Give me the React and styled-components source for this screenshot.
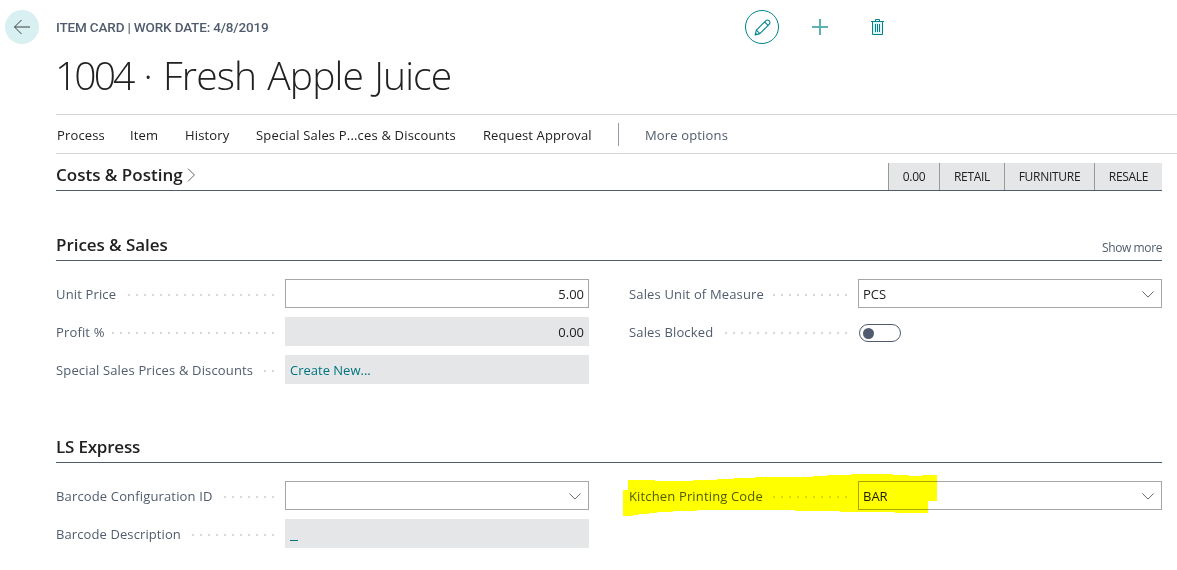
import React from "react";
import styled, { createGlobalStyle } from "styled-components";

const Global = createGlobalStyle`
  * { box-sizing: border-box; }
  body { margin: 0; background: #fff; overflow: hidden; }
`;

const ink = "#212121";
const slate = "#505c6d";
const teal = "#00757d";

const Page = styled.main`
  position: relative;
  width: 1177px;
  height: 570px;
  font-family: "Open Sans", "Noto Sans", sans-serif;
  font-size: 13px;
  color: ${ink};
  white-space: nowrap;
`;

const Label = styled.span`
  letter-spacing: ${(p) => p.$track ?? 0.15}px;
`;

const TopBar = styled.header`
  display: flex;
  align-items: center;
  height: 54px;
  padding-left: 5px;
`;

const BackButton = styled.button`
  display: flex;
  align-items: center;
  justify-content: center;
  width: 34px;
  height: 34px;
  padding: 0;
  border: 0;
  border-radius: 50%;
  background: #d9f0f2;
`;

const Caption = styled.div`
  width: 706px;
  padding-left: 17px;
  font-family: Roboto, sans-serif;
  font-size: 13.5px;
  font-weight: 500;
  color: ${slate};
`;

const Tools = styled.div`
  display: flex;
  align-items: center;
  gap: 24px;
`;

const Tool = styled.button`
  display: flex;
  align-items: center;
  justify-content: center;
  width: 34px;
  height: 34px;
  padding: 0;
  background: none;
  border: ${(p) => (p.$ringed ? "1px solid #00838a" : "0")};
  border-radius: 50%;
  &:last-child { margin-left: -1px; }
`;

const Title = styled.h1`
  height: 60px;
  margin: 0;
  padding-left: 55px;
  font-size: 39px;
  font-weight: 300;
  line-height: 41px;
  letter-spacing: -0.85px;
  word-spacing: 1.8px;
`;

const ItemNumber = styled.span`
  letter-spacing: -2.9px;
`;

const ActionBar = styled.nav`
  display: flex;
  align-items: center;
  height: 40px;
  margin-left: 56px;
  padding: 0 0 0 1px;
  border-top: 1px solid #d3d5d8;
  border-bottom: 1px solid #d3d5d8;
`;

const Action = styled.a`
  width: ${(p) => p.$width}px;
  letter-spacing: ${(p) => p.$track ?? 0.15}px;
  padding-top: 2px;
  color: ${(p) => (p.$muted ? slate : ink)};
`;

const Divider = styled.i`
  width: 1px;
  height: 23px;
  margin-right: 26px;
  background: #919cab;
`;

const Section = styled.section`
  margin: ${(p) => p.$top}px 15px 0 56px;
`;

const SectionHead = styled.div`
  display: flex;
  align-items: flex-end;
  justify-content: space-between;
  height: 28px;
  border-bottom: 1px solid ${slate};
`;

const Heading = styled.h2`
  display: flex;
  align-items: center;
  gap: 4px;
  height: 27px;
  margin: 0;
  padding-bottom: 3px;
  font-size: 17px;
  font-weight: 600;
  line-height: 24px;
  letter-spacing: ${(p) => p.$track || 0}px;
`;

const Facts = styled.div`
  display: flex;
  height: 27px;
  background: #e5e6e8;
`;

const Fact = styled.span`
  width: ${(p) => p.$width}px;
  border-left: 1px solid #999;
  font-size: 12px;
  line-height: 27px;
  text-align: center;
  letter-spacing: -0.28px;
`;

const ShowMore = styled.a`
  padding-bottom: 4px;
  font-size: 12px;
  line-height: 16px;
  letter-spacing: -0.4px;
  color: ${slate};
`;

const Columns = styled.div`
  display: grid;
  grid-template-columns: 533px 533px;
  column-gap: 40px;
  padding-top: 18px;
`;

const Column = styled.div`
  display: flex;
  flex-direction: column;
  gap: 9px;
`;

const Row = styled.div`
  display: grid;
  grid-template-columns: 229px 304px;
  height: 29px;
`;

const RowLabel = styled.div`
  display: flex;
  align-items: center;
  justify-content: space-between;
  padding-right: 11px;
  color: ${slate};
`;

const Leader = styled.i`
  width: ${(p) => p.$dots * 8 - 6}px;
  height: 2px;
  margin-top: 3px;
  background: repeating-linear-gradient(90deg, #d6d8db 0 2px, transparent 2px 8px);
`;

const Field = styled.div`
  display: flex;
  align-items: center;
  justify-content: ${(p) => (p.$numeric ? "flex-end" : "space-between")};
  padding: 1px ${(p) => (p.$lookup ? 7 : 4)}px 0 4px;
  border: 1px solid ${(p) => (p.$readOnly ? "#e5e6e8" : "#a6a6a6")};
  background: ${(p) => (p.$readOnly ? "#e5e6e8" : "#fff")};
  color: ${(p) => (p.$link ? teal : ink)};
`;

const EmptyLink = styled.span`
  width: 8px;
  height: 13px;
  border-bottom: 1px solid ${teal};
`;

const Switch = styled.div`
  display: flex;
  align-items: center;
  width: 42px;
  height: 18px;
  margin: 7px 0 0 1px;
  padding-left: 3px;
  border: 1px solid ${slate};
  border-radius: 9px;
  &::before {
    content: "";
    width: 11px;
    height: 11px;
    border-radius: 50%;
    background: ${slate};
  }
`;

const Marker = styled.svg`
  position: absolute;
  left: 623px;
  top: 474px;
  mix-blend-mode: multiply;
  pointer-events: none;
`;

const BackIcon = () => (
  <svg width="18" height="16" viewBox="0 0 18 16" fill="none" stroke="#3a3f45">
    <path d="M17 8H1.5M8.5 1L1.5 8l7 7" />
  </svg>
);

const PencilIcon = () => (
  <svg width="17" height="17" viewBox="0 0 18 18" fill="none" stroke="#00838a" strokeWidth="1.15" strokeLinejoin="round">
    <path d="M1.2 16.8l1.3-5L12.4 1.9a2.6 2.6 0 0 1 3.7 0 2.6 2.6 0 0 1 0 3.7L6.2 15.5z" />
    <path d="M2.5 11.8l3.7 3.7M11.2 3.1l3.7 3.7M1.6 15.2l1.2 1.2" />
  </svg>
);

const PlusIcon = () => (
  <svg width="16" height="16" viewBox="0 0 16 16" stroke="#5fb0b5" strokeWidth="2">
    <path d="M8 0v16M0 8h16" />
  </svg>
);

const TrashIcon = () => (
  <svg width="13" height="16" viewBox="0 0 13 16" fill="none" stroke="#00838a">
    <path d="M1.5 2.5h10v13h-10z" fill="#e3f4f5" stroke="none" />
    <path d="M0 2.5h13M4.5 2.5v-2h4v2M1.5 2.5v13h10v-13" />
    <path d="M4.5 5v8M6.5 5v8M8.5 5v8" />
  </svg>
);

const ChevronDown = () => (
  <svg width="12" height="7" viewBox="0 0 12 7" fill="none" stroke="#666">
    <path d="M.4.5L6 6.1 11.6.5" />
  </svg>
);

const ChevronRight = () => (
  <svg width="9" height="14" viewBox="0 0 9 14" fill="none" stroke="#666">
    <path d="M1 .6L7.4 7 1 13.4" />
  </svg>
);

const FormRow = ({ label, track, dots, children }) => (
  <Row>
    <RowLabel>
      <Label $track={track}>{label}</Label>
      <Leader $dots={dots} />
    </RowLabel>
    {children}
  </Row>
);

export default function App() {
  return (
    <Page>
      <Global />
      <TopBar>
        <BackButton aria-label="Back"><BackIcon /></BackButton>
        <Caption><Label $track={-0.16}>ITEM CARD | WORK DATE: 4/8/2019</Label></Caption>
        <Tools>
          <Tool $ringed aria-label="Edit"><PencilIcon /></Tool>
          <Tool aria-label="New"><PlusIcon /></Tool>
          <Tool aria-label="Delete"><TrashIcon /></Tool>
        </Tools>
      </TopBar>
      <Title><ItemNumber>1004</ItemNumber> · Fresh Apple Juice</Title>
      <ActionBar>
        <Action $width={73}>Process</Action>
        <Action $width={55}>Item</Action>
        <Action $width={71}>History</Action>
        <Action $width={227} $track={0.18}>Special Sales P...ces &amp; Discounts</Action>
        <Action $width={135} $track={0.1}>Request Approval</Action>
        <Divider />
        <Action $width={90} $muted>More options</Action>
      </ActionBar>

      <Section $top={9}>
        <SectionHead>
          <Heading>Costs &amp; Posting<ChevronRight /></Heading>
          <Facts>
            <Fact $width={51}>0.00</Fact>
            <Fact $width={65}>RETAIL</Fact>
            <Fact $width={90}>FURNITURE</Fact>
            <Fact $width={68}>RESALE</Fact>
          </Facts>
        </SectionHead>
      </Section>

      <Section $top={42}>
        <SectionHead>
          <Heading $track={-0.05}>Prices &amp; Sales</Heading>
          <ShowMore>Show more</ShowMore>
        </SectionHead>
        <Columns>
          <Column>
            <FormRow label="Unit Price" dots={19}><Field $numeric>5.00</Field></FormRow>
            <FormRow label="Profit %" dots={21}><Field $numeric $readOnly>0.00</Field></FormRow>
            <FormRow label="Special Sales Prices & Discounts" dots={2}>
              <Field $readOnly $link>Create New...</Field>
            </FormRow>
          </Column>
          <Column>
            <FormRow label="Sales Unit of Measure" dots={10}>
              <Field $lookup>PCS<ChevronDown /></Field>
            </FormRow>
            <FormRow label="Sales Blocked" dots={16}><Switch /></FormRow>
          </Column>
        </Columns>
      </Section>

      <Section $top={51}>
        <SectionHead><Heading $track={-0.2}>LS Express</Heading></SectionHead>
        <Columns>
          <Column>
            <FormRow label="Barcode Configuration ID" dots={7}>
              <Field $lookup><span /><ChevronDown /></Field>
            </FormRow>
            <FormRow label="Barcode Description" dots={11} track={0.1}>
              <Field $readOnly $link><EmptyLink /></Field>
            </FormRow>
          </Column>
          <Column>
            <FormRow label="Kitchen Printing Code" dots={10}>
              <Field $lookup>BAR<ChevronDown /></Field>
            </FormRow>
          </Column>
        </Columns>
      </Section>

      <Marker width="314" height="42" viewBox="0 0 314 42" shapeRendering="crispEdges">
        <path
          fill="#ff0"
          d="M0 16h5V6h27v1h38V6h24V5h17V4h21V3h58V2h14V1h24V0h42v1h16v1h13V1h15v26h-9v12h-33v-1h-55v-1h-45v-1H74v1H50v1H34v1H26v1H16v1H10v1H0z"
        />
      </Marker>
    </Page>
  );
}
